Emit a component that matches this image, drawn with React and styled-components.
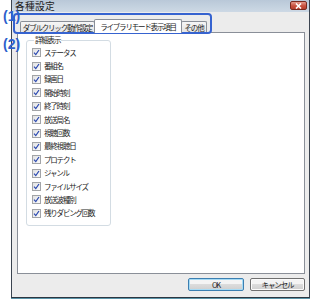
import React from "react";
import styled, { createGlobalStyle } from "styled-components";

const Global = createGlobalStyle`
  html, body { margin: 0; padding: 0; background: #ffffff; }
  body { font-family: "Noto Sans CJK JP", "Noto Sans", sans-serif; }
`;

const JP = `"Noto Sans CJK JP", "Noto Sans", sans-serif`;

const Page = styled.div`
  position: relative;
  width: 311px;
  height: 300px;
  overflow: hidden;
  background: #ffffff;
`;

const Window = styled.div`
  margin-left: 11px;
  width: 299px;
  height: 298px;
  box-sizing: border-box;
  display: flex;
  flex-direction: column;
  border-left: 1px solid #3b4450;
  border-right: 1px solid #3b4450;
  border-bottom: 1px solid #2c3640;
  box-shadow: 0 1px 0 #5b94a8;
`;

const TitleBar = styled.div`
  height: 12px;
  flex: none;
  display: flex;
  align-items: center;
  background: linear-gradient(#b9c8d8, #cdd9e5);
  padding-left: 3px;
`;

const Title = styled.span`
  font-family: ${JP};
  font-size: 9.8px;
  line-height: 12px;
  letter-spacing: 0.2px;
  color: #222;
`;

const CloseButton = styled.div`
  margin-left: auto;
  margin-right: 2px;
  width: 17px;
  height: 9px;
  margin-top: -1px;
  box-sizing: border-box;
  border: 1px solid #7a2a20;
  border-radius: 2px;
  background: linear-gradient(#e59a8c, #c8503e 55%, #b8402e);
  display: flex;
  align-items: center;
  justify-content: center;
`;

const Client = styled.div`
  flex: 1;
  display: flex;
  flex-direction: column;
  background: #ececec;
  padding: 0 4px 0 5px;
`;

const TabStrip = styled.div`
  margin-top: 7px;
  height: 13px;
  display: flex;
  align-items: flex-end;
  padding-left: 3px;
`;

const Tab = styled.div`
  box-sizing: border-box;
  width: ${(p) => p.$w}px;
  height: ${(p) => (p.$active ? 14 : 11)}px;
  margin-bottom: ${(p) => (p.$active ? -1 : 0)}px;
  margin-left: ${(p) => (p.$first ? 0 : -1)}px;
  position: relative;
  z-index: ${(p) => (p.$active ? 2 : 1)};
  border: 1px solid #8a8f98;
  border-bottom: none;
  border-radius: 2px 2px 0 0;
  background: ${(p) =>
    p.$active ? "#ffffff" : "linear-gradient(#f6f6f6, #e4e4e4)"};
  display: flex;
  align-items: ${(p) => (p.$active ? "flex-start" : "center")};
  justify-content: center;
  padding-top: ${(p) => (p.$active ? 2 : 0)}px;
  font-family: ${JP};
  font-size: 7.5px;
  letter-spacing: -1.2px;
  line-height: 9px;
  color: #1c1c1c;
  white-space: nowrap;
  overflow: hidden;
`;

const Panel = styled.div`
  height: 242px;
  box-sizing: border-box;
  border: 1px solid #8a8f98;
  background: #ffffff;
  padding: 2px 0 0 8px;
`;

const Group = styled.fieldset`
  margin: 0;
  width: 85px;
  height: 191px;
  box-sizing: border-box;
  border: 1px solid #d3dce3;
  border-radius: 3px;
  padding: 1px 0 0 5px;
  min-width: 0;
`;

const Legend = styled.legend`
  padding: 0 1px;
  margin-left: 2px;
  font-family: ${JP};
  font-size: 7.5px;
  letter-spacing: -1.2px;
  line-height: 10px;
  color: #1c1c1c;
`;

const Row = styled.div`
  height: 13.4px;
  display: flex;
  align-items: center;
  gap: 3px;
`;

const Box = styled.span`
  width: 9px;
  height: 9px;
  box-sizing: border-box;
  border: 1px solid #a2a4a7;
  background: linear-gradient(135deg, #e2e2e2, #fafafa);
  display: flex;
  align-items: center;
  justify-content: center;
  flex: none;
`;

const Label = styled.span`
  font-family: ${JP};
  font-size: 7.5px;
  letter-spacing: -1.2px;
  line-height: 10px;
  color: #1c1c1c;
  white-space: nowrap;
`;

const ButtonRow = styled.div`
  margin-top: 4px;
  display: flex;
  justify-content: flex-end;
  gap: 6px;
`;

const Button = styled.div`
  width: ${(p) => p.$w}px;
  height: 13px;
  box-sizing: border-box;
  border: 1px solid ${(p) => (p.$default ? "#3c7fb1" : "#707070")};
  border-radius: 2px;
  background: linear-gradient(#f4f4f4 45%, #dcdcdc 50%, #cfcfcf);
  box-shadow: ${(p) =>
    p.$default ? "inset 0 0 0 1px #a6dbf5" : "inset 0 0 0 1px #fbfbfb"};
  display: flex;
  align-items: center;
  justify-content: center;
  font-family: ${JP};
  font-size: 7.5px;
  letter-spacing: -1.1px;
  line-height: 10px;
  color: #1c1c1c;
`;

const Highlight = styled.div`
  position: absolute;
  left: 13px;
  top: 13px;
  width: 199px;
  height: 21px;
  box-sizing: border-box;
  border: 2px solid #3663d0;
  border-radius: 4px;
  pointer-events: none;
`;

const Marker = styled.div`
  position: absolute;
  left: 3px;
  top: ${(p) => p.$top}px;
  font-family: "Liberation Sans", Arial, sans-serif;
  font-weight: bold;
  font-size: 14px;
  line-height: 16px;
  color: #2d5fcc;
`;

const Check = () => (
  <svg width="7" height="7" viewBox="0 0 7 7">
    <path
      d="M1 3.6 L2.8 5.6 L6 1"
      fill="none"
      stroke="#2a48b0"
      strokeWidth="1.2"
    />
  </svg>
);

const CloseX = () => (
  <svg width="7" height="6" viewBox="0 0 7 6">
    <path d="M1 0.5 L6 5.5 M6 0.5 L1 5.5" stroke="#ffffff" strokeWidth="1.6" />
  </svg>
);

const items = [
  "ステータス",
  "番組名",
  "録画日",
  "開始時刻",
  "終了時刻",
  "放送局名",
  "視聴回数",
  "最終視聴日",
  "プロテクト",
  "ジャンル",
  "ファイルサイズ",
  "放送波種別",
  "残りダビング回数",
];

export default function App() {
  return (
    <Page>
      <Global />
      <Window>
        <TitleBar>
          <Title>各種設定</Title>
          <CloseButton>
            <CloseX />
          </CloseButton>
        </TitleBar>
        <Client>
          <TabStrip>
            <Tab $first $w={75}>ダブルクリック動作設定</Tab>
            <Tab $active $w={88}>ライブラリモード表示項目</Tab>
            <Tab $w={26}>その他</Tab>
          </TabStrip>
          <Panel>
            <Group>
              <Legend>詳細表示</Legend>
              {items.map((t) => (
                <Row key={t}>
                  <Box>
                    <Check />
                  </Box>
                  <Label>{t}</Label>
                </Row>
              ))}
            </Group>
          </Panel>
          <ButtonRow>
            <Button $default $w={56}>OK</Button>
            <Button $w={55}>キャンセル</Button>
          </ButtonRow>
        </Client>
      </Window>
      <Highlight />
      <Marker $top={8}>(1)</Marker>
      <Marker $top={36}>(2)</Marker>
    </Page>
  );
}
